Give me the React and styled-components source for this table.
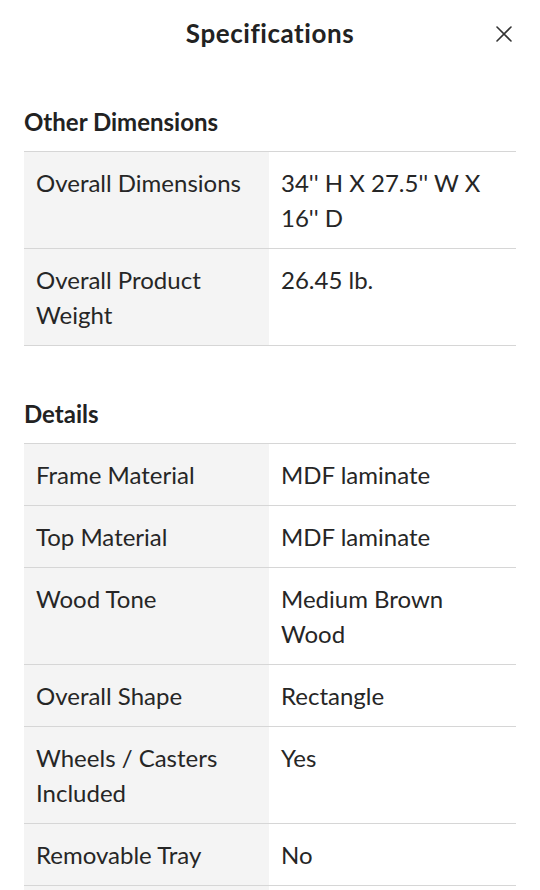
import React from 'react';
import styled, { createGlobalStyle } from 'styled-components';

const GlobalStyle = createGlobalStyle`
  body {
    margin: 0;
    background: #fff;
    font-family: Lato, "Noto Sans", sans-serif;
    color: #222;
  }
`

const Sheet = styled.div`
  width: 540px;
  background: #fff;
`

const Header = styled.header`
  position: relative;
  display: flex;
  align-items: center;
  justify-content: center;
  padding: 18px 24px 20px;
`

const Title = styled.h1`
  margin: 0;
  font-size: 26px;
  line-height: 30px;
  font-weight: 700;
  letter-spacing: 0.55px;
  color: #222;
`

const Close = styled.button`
  position: absolute;
  right: 22px;
  top: 20px;
  width: 28px;
  height: 28px;
  padding: 0;
  border: 0;
  background: none;
  display: flex;
  align-items: center;
  justify-content: center;
  cursor: pointer;
`

const Body = styled.div`
  padding: 39px 24px 0;
`

const Section = styled.section`
  & + & {
    margin-top: 53px;
  }
`

const Heading = styled.h2`
  margin: 0 0 14px;
  font-size: 24px;
  line-height: 30px;
  font-weight: 700;
  color: #222;
`

const Table = styled.div`
  border-top: 1px solid #d6d6d6;
`

const Row = styled.div`
  display: grid;
  grid-template-columns: 245px 1fr;
  min-height: 26px;
  border-bottom: 1px solid #d6d6d6;
`

const Cell = styled.div`
  padding: 13px 12px;
  font-size: 24px;
  line-height: 35px;
  color: #262626;
  background: ${props => props.label ? '#f4f4f4' : '#fff'};
`

const sections = [
  {
    title: 'Other Dimensions',
    rows: [
      ['Overall Dimensions', '34\'\' H X 27.5\'\' W X 16\'\' D'],
      ['Overall Product Weight', '26.45 lb.'],
    ],
  },
  {
    title: 'Details',
    rows: [
      ['Frame Material', 'MDF laminate'],
      ['Top Material', 'MDF laminate'],
      ['Wood Tone', 'Medium Brown Wood'],
      ['Overall Shape', 'Rectangle'],
      ['Wheels / Casters Included', 'Yes'],
      ['Removable Tray', 'No'],
      // next row continues below the fold
      ['', ''],
    ],
  },
]

function CloseIcon() {
  return (
    <svg width="16" height="16" viewBox="0 0 16 16" fill="none">
      <path d="M1 1L15 15M15 1L1 15" stroke="#333" strokeWidth="1.6" strokeLinecap="round" />
    </svg>
  )
}

export default function App() {
  return (
    <Sheet>
      <GlobalStyle />
      <Header>
        <Title>Specifications</Title>
        <Close aria-label="Close"><CloseIcon /></Close>
      </Header>

      <Body>
        {sections.map(section => (
          <Section key={section.title}>
            <Heading>{section.title}</Heading>
            <Table>
              {section.rows.map(([label, value], i) => (
                <Row key={i}>
                  <Cell label>{label}</Cell>
                  <Cell>{value}</Cell>
                </Row>
              ))}
            </Table>
          </Section>
        ))}
      </Body>
    </Sheet>
  );
}
